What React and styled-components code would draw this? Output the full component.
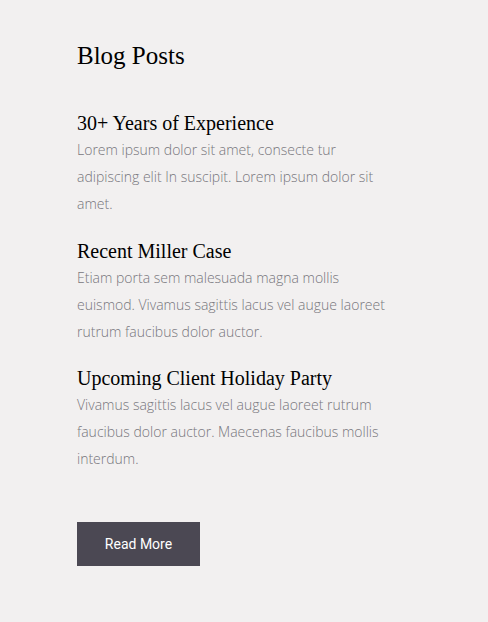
import React from "react"
import styled, { createGlobalStyle } from "styled-components"

const Global = createGlobalStyle`
  html, body {
    margin: 0;
    padding: 0;
    background: #f2f0f0;
  }
`

const Section = styled.section`
  min-height: 622px;
  box-sizing: border-box;
  padding: 41px 0 0 77px;
  background: #f2f0f0;
`

const Heading = styled.h2`
  margin: 0;
  font-family: "Liberation Serif", "Times New Roman", serif;
  font-weight: normal;
  font-size: 25px;
  line-height: 30px;
  color: #000;
`

const PostList = styled.div`
  display: flex;
  flex-direction: column;
  gap: 21.5px;
  margin-top: 40px;
  width: 320px;
`

const Post = styled.article`
  display: flex;
  flex-direction: column;
  gap: 1px;
`

const Title = styled.h3`
  margin: 0;
  font-family: "Liberation Serif", "Times New Roman", serif;
  font-weight: normal;
  font-size: 20px;
  line-height: 24px;
  color: #000;
`

const Excerpt = styled.p`
  margin: 0;
  font-family: "Open Sans", sans-serif;
  font-weight: 300;
  font-size: 14px;
  line-height: 27px;
  color: #77767c;
`

const Button = styled.button`
  margin-top: 50px;
  width: 123px;
  height: 44px;
  border: none;
  background: #4b4853;
  color: #fff;
  font-family: Roboto, sans-serif;
  font-size: 14px;
  cursor: pointer;
`

const posts = [
  {
    title: "30+ Years of Experience",
    text: "Lorem ipsum dolor sit amet, consecte tur adipiscing elit In suscipit. Lorem ipsum dolor sit amet.",
  },
  {
    title: "Recent Miller Case",
    text: "Etiam porta sem malesuada magna mollis euismod. Vivamus sagittis lacus vel augue laoreet rutrum faucibus dolor auctor.",
  },
  {
    title: "Upcoming Client Holiday Party",
    text: "Vivamus sagittis lacus vel augue laoreet rutrum faucibus dolor auctor. Maecenas faucibus mollis interdum.",
  },
]

const App = () => {
  return (
    <>
      <Global />
      <Section>
        <Heading>Blog Posts</Heading>
        <PostList>
          {posts.map((p) => (
            <Post key={p.title}>
              <Title>{p.title}</Title>
              <Excerpt>{p.text}</Excerpt>
            </Post>
          ))}
        </PostList>
        <Button>Read More</Button>
      </Section>
    </>
  )
}

export default App
